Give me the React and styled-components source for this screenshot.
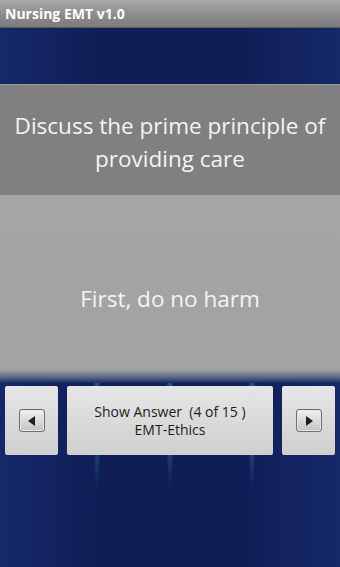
import React from 'react'
import styled, { createGlobalStyle } from 'styled-components';

const GlobalStyle = createGlobalStyle`
  html, body { margin: 0; padding: 0; background: #11215a; }
  * { box-sizing: border-box; }
`;

export default function App() {
  return (
    <>
      <GlobalStyle />
      <Screen>
        <TitleBar>Nursing EMT v1.0</TitleBar>
        <TopBand />
        <Question>Discuss the prime principle of providing care</Question>
        <Answer>First, do no harm</Answer>
        <ButtonRow>
          <NavButton>
            <ArrowIcon dir="left" />
          </NavButton>
          <MainButton>
            <span>Show Answer&nbsp;&nbsp;(4 of 15 )</span>
            <span>EMT-Ethics</span>
          </MainButton>
          <NavButton>
            <ArrowIcon dir="right" />
          </NavButton>
        </ButtonRow>
      </Screen>
    </>
  )
};

const ArrowIcon = ({ dir }) => (
  <IconBox>
    <svg width="12" height="12" viewBox="0 0 12 12">
      {dir === "left"
        ? <polygon points="9,1 9,11 2,6" fill="#1e1e1e" />
        : <polygon points="3,1 3,11 10,6" fill="#1e1e1e" />}
    </svg>
  </IconBox>
);

const Screen = styled.div`
  width: 340px;
  height: 567px;
  display: flex;
  flex-direction: column;
  font-family: "Open Sans", "Noto Sans", sans-serif;
  background-color: #11215a;
  background-image:
    radial-gradient(ellipse 4px 80px at 97px 410px, rgba(70,160,235,0.6), transparent),
    radial-gradient(ellipse 4px 80px at 170px 410px, rgba(70,160,235,0.6), transparent),
    radial-gradient(ellipse 4px 80px at 252px 410px, rgba(70,160,235,0.6), transparent),
    linear-gradient(to right, #15286a 0%, #0f1e55 30%, #0f1e55 70%, #15286a 100%);
  overflow: hidden;
`;

const TitleBar = styled.div`
  height: 28px;
  display: flex;
  align-items: center;
  padding-left: 5px;
  color: #fff;
  font-weight: bold;
  font-size: 14px;
  background: linear-gradient(to bottom, #a8a8a8, #8a8a8a 60%, #7c7c7c);
  border-bottom: 1px solid #5c5c5c;
`;

const TopBand = styled.div`
  height: 56px;
`;

const Question = styled.div`
  height: 111px;
  display: flex;
  align-items: center;
  justify-content: center;
  text-align: center;
  padding: 4px 8px 0 8px;
  color: #f4f4f4;
  font-size: 22.5px;
  line-height: 33px;
  background: #808080;
  border-top: 1px solid #9a9a9a;
`;

const Answer = styled.div`
  height: 188px;
  display: flex;
  align-items: center;
  justify-content: center;
  padding-top: 18px;
  color: #f4f4f4;
  font-size: 22.5px;
  background: linear-gradient(to bottom, #a5a5a5 0%, #a2a2a2 93%, #5a6588 97%, #1a2a60 100%);
`;

const ButtonRow = styled.div`
  display: flex;
  gap: 8px;
  padding: 3px 5px 0 5px;
  height: 72px;
`;

const ButtonBase = styled.div`
  height: 69px;
  display: flex;
  align-items: center;
  justify-content: center;
  background: linear-gradient(to bottom, #e6e6e6, #d8d8d8 60%, #cfcfcf);
  border-radius: 2px;
`;

const NavButton = styled(ButtonBase)`
  width: 53px;
  flex: none;
`;

const MainButton = styled(ButtonBase)`
  flex: 1;
  margin: 0 1px;
  flex-direction: column;
  color: #1c1c1c;
  font-size: 14px;
  line-height: 18px;
`;

const IconBox = styled.div`
  width: 26px;
  height: 23px;
  display: flex;
  align-items: center;
  justify-content: center;
  border: 1px solid #6f6f6f;
  border-radius: 3px;
  background: linear-gradient(to bottom, #f0f0f0, #c4c4c4);
  box-shadow: inset 0 0 0 1px #e6e6e6;
`;
